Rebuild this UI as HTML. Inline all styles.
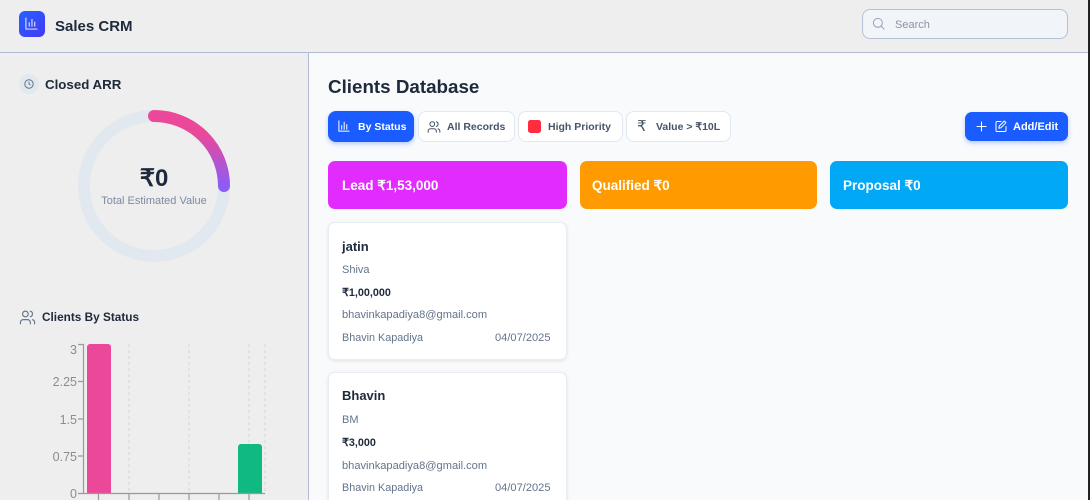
<!DOCTYPE html>
<html><head><meta charset="utf-8">
<style>
html,body{margin:0;padding:0;width:1090px;height:500px;overflow:hidden;background:#f8fafc}
body{position:relative;font-family:"Liberation Sans","Noto Sans CJK JP",sans-serif;color:#1e293b}
div,span,svg{position:absolute;box-sizing:border-box}
.t{white-space:nowrap;line-height:1}
.tab{background:#fff;border:1px solid #e2e8f0;border-radius:8px;top:111px;height:31px}
.tl{top:122px;font-size:10.5px;font-weight:bold;color:#475569}
.col{top:161px;height:48px;border-radius:7px;color:#fff;font-size:13.5px;font-weight:bold;line-height:49px;padding-left:14px;white-space:nowrap}
.card{left:328px;width:239px;height:138px;background:#fff;border:1px solid #e9edf3;border-radius:7px;box-shadow:0 1px 3px rgba(15,23,42,.1)}
.g{font-size:11px;color:#64748b}
.w{font-size:11.1px}
.m{font-weight:bold;font-size:10.8px}
</style></head><body>
<div style="left:0;top:0;width:1090px;height:53px;background:#eeeeee;border-bottom:1px solid #aebbd2"></div>
<div style="left:0;top:53px;width:309px;height:447px;background:#eeeeee;border-right:1px solid #aebbd2"></div>
<div style="left:1088px;top:0;width:2px;height:500px;background:#222"></div>

<div style="left:19px;top:11px;width:26px;height:26px;border-radius:6px;background:linear-gradient(135deg,#2563ff,#4338f5)"></div>
<svg style="left:25px;top:17px" width="13" height="13" viewBox="0 0 14 14" fill="none" stroke="#fff" stroke-width="1" stroke-linecap="round"><path d="M1 1v12h12M4.500 10V6M7.500 10V2.500M10.500 10V5.500"/></svg>
<div class="t" style="left:55px;top:18.500px;font-size:15px;font-weight:bold;color:#1e293b">Sales CRM</div>

<div style="left:862px;top:9px;width:206px;height:30px;background:#f1f5f9;border:1px solid #b4c0d6;border-radius:8px"></div>
<svg style="left:872px;top:17px" width="13" height="13" viewBox="0 0 14 14" fill="none" stroke="#94a3b8" stroke-width="1.100" stroke-linecap="round"><circle cx="6.300" cy="6.300" r="4.800"/><path d="M10 10l3 3"/></svg>
<div class="t" style="left:895px;top:20px;font-size:11px;color:#8a94a3">Search</div>

<div style="left:19px;top:74px;width:20px;height:20px;border-radius:50%;background:#e2e8f0"></div>
<svg style="left:24px;top:79px" width="10" height="10" viewBox="0 0 10 10" fill="none" stroke="#64748b" stroke-width="1"><circle cx="5" cy="5" r="4.200"/><path d="M5 2.600V5l1.600.9"/></svg>
<div class="t" style="left:45px;top:78px;font-size:13.300px;font-weight:bold;color:#1e293b">Closed ARR</div>

<svg style="left:74px;top:106px" width="160" height="160" viewBox="0 0 160 160" fill="none">
<defs><linearGradient id="g1" x1="0" y1="0" x2="0" y2="1"><stop offset="0" stop-color="#ec4899"/><stop offset=".25" stop-color="#ec4899"/><stop offset="1" stop-color="#8b5cf6"/></linearGradient></defs>
<circle cx="80" cy="80" r="70" stroke="#e2e8f0" stroke-width="12"/>
<path d="M80 10A70 70 0 0 1 150 80" stroke="url(#g1)" stroke-width="12" stroke-linecap="round"/>
</svg>
<div class="t" style="left:74px;width:160px;text-align:center;top:167px;font-size:24px;font-weight:bold;color:#1e293b">₹0</div>
<div class="t" style="left:74px;width:160px;text-align:center;top:195.500px;font-size:11px;color:#7c8aa0">Total Estimated Value</div>

<svg style="left:19px;top:309px" width="17" height="17" viewBox="0 0 24 24" fill="none" stroke="#64748b" stroke-width="1.600" stroke-linecap="round" stroke-linejoin="round"><path d="M16 21v-2a4 4 0 0 0-4-4H6a4 4 0 0 0-4 4v2"/><circle cx="9" cy="7" r="4"/><path d="M22 21v-2a4 4 0 0 0-3-3.870M16 3.130a4 4 0 0 1 0 7.750"/></svg>
<div class="t" style="left:42px;top:312px;font-size:11.800px;font-weight:bold;color:#1e293b">Clients By Status</div>

<svg style="left:0;top:330px" width="300" height="170" viewBox="0 330 300 170" fill="none">
<g stroke="#d4d4d4" stroke-dasharray="3 3"><path d="M129 344V493M189 344V493M249 344V493M265 344V493"/></g>
<path d="M87 347a3 3 0 0 1 3-3h18a3 3 0 0 1 3 3V493H87z" fill="#ec4899"/>
<path d="M238 447a3 3 0 0 1 3-3h18a3 3 0 0 1 3 3V493H238z" fill="#10b981"/>
<g stroke="#999" stroke-width="1.200"><path d="M83.500 344V494M83 493.500H265M78 344.500h6M78 381.500h6M78 419h6M78 456h6M78 493.500h6M98.500 494v6M129 494v6M159 494v6M189 494v6M219 494v6M249 494v6"/></g>
<g fill="#8c8c8c" font-family="Liberation Sans" font-size="12.500" text-anchor="end"><text x="77" y="354">3</text><text x="77" y="386">2.25</text><text x="77" y="424">1.5</text><text x="77" y="461">0.75</text><text x="77" y="498">0</text></g>
</svg>

<div class="t" style="left:328px;top:78px;font-size:18.800px;font-weight:bold;color:#1e293b">Clients Database</div>

<div class="tab" style="left:328px;width:86px;background:#1a5cff;border-color:#1a5cff;box-shadow:0 2px 5px rgba(26,92,255,.3)"></div>
<svg style="left:338px;top:120px" width="12" height="12" viewBox="0 0 13 13" fill="none" stroke="#fff" stroke-width="1.100" stroke-linecap="round"><path d="M1 1v11h11M4 10V6M6.700 10V2.500M9.500 10V5"/></svg>
<div class="t tl" style="left:358px;color:#fff">By Status</div>

<div class="tab" style="left:418px;width:97px"></div>
<svg style="left:427px;top:120px" width="14" height="14" viewBox="0 0 24 24" fill="none" stroke="#475569" stroke-width="1.800" stroke-linecap="round" stroke-linejoin="round"><path d="M16 21v-2a4 4 0 0 0-4-4H6a4 4 0 0 0-4 4v2"/><circle cx="9" cy="7" r="4"/><path d="M22 21v-2a4 4 0 0 0-3-3.870M16 3.130a4 4 0 0 1 0 7.750"/></svg>
<div class="t tl" style="left:447px">All Records</div>

<div class="tab" style="left:518px;width:105px"></div>
<div style="left:528px;top:120px;width:13px;height:13px;border-radius:2.500px;background:#ff2d3d"></div>
<div class="t tl" style="left:548px">High Priority</div>

<div class="tab" style="left:626px;width:105px"></div>
<div class="t" style="left:637px;top:119px;font-size:15px;color:#475569">₹</div>
<div class="t tl" style="left:656px">Value &gt; ₹10L</div>

<div style="left:965px;top:112px;width:103px;height:29px;border-radius:7px;background:#1a5cff;box-shadow:0 2px 5px rgba(26,92,255,.3)"></div>
<svg style="left:976px;top:121px" width="11" height="11" viewBox="0 0 11 11" stroke="#fff" stroke-width="1.100" stroke-linecap="round"><path d="M5.500 1v9M1 5.500h9"/></svg>
<svg style="left:995px;top:120px" width="12" height="12" viewBox="0 0 12 12" fill="none" stroke="#fff" stroke-width="1" stroke-linecap="round" stroke-linejoin="round"><path d="M6 1.500H2A1 1 0 0 0 1 2.500v8a1 1 0 0 0 1 1h8a1 1 0 0 0 1-1V6.500"/><path d="M9.300 1l1.700 1.700-5 5-2.200.500.500-2.200z"/></svg>
<div class="t" style="left:1013px;top:122px;font-size:11px;font-weight:bold;color:#fff">Add/Edit</div>

<div class="col" style="left:328px;width:239px;background:#e22cff">Lead ₹1,53,000</div>
<div class="col" style="left:580px;width:237px;padding-left:12px;background:#ff9a00">Qualified ₹0</div>
<div class="col" style="left:830px;width:238px;padding-left:13px;background:#00a8f5">Proposal ₹0</div>

<div class="card" style="top:222px"></div>
<div class="t" style="left:342px;top:240px;font-size:13px;font-weight:bold">jatin</div>
<div class="t g" style="left:342px;top:265px">Shiva</div>
<div class="t m" style="left:342px;top:288px">₹1,00,000</div>
<div class="t g w" style="left:342px;top:310px">bhavinkapadiya8@gmail.com</div>
<div class="t g" style="left:342px;top:333px;font-size:10.800px">Bhavin Kapadiya</div>
<div class="t g w" style="left:495px;top:333px">04/07/2025</div>

<div class="card" style="top:372px"></div>
<div class="t" style="left:342px;top:389px;font-size:13px;font-weight:bold">Bhavin</div>
<div class="t g" style="left:342px;top:415px">BM</div>
<div class="t m" style="left:342px;top:438px">₹3,000</div>
<div class="t g w" style="left:342px;top:461px">bhavinkapadiya8@gmail.com</div>
<div class="t g" style="left:342px;top:483px;font-size:10.800px">Bhavin Kapadiya</div>
<div class="t g w" style="left:495px;top:483px">04/07/2025</div>
</body></html>
